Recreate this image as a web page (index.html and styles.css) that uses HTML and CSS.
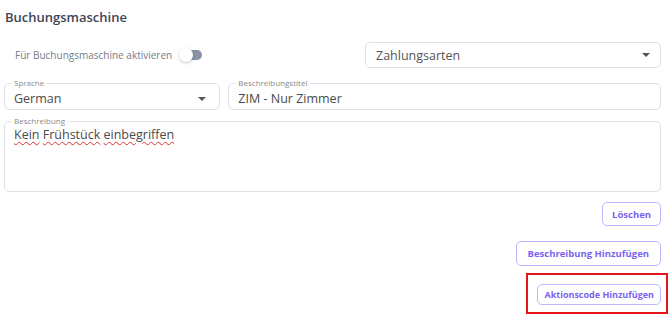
FILE: index.html
```html
<!DOCTYPE html>
<html lang="de">
<head>
  <meta charset="UTF-8">
  <title>Buchungsmaschine</title>
  <link rel="stylesheet" href="styles.css">
</head>
<body>

  <div class="panel">
    <h3 class="panel-title">Buchungsmaschine</h3>

    <!-- Aktivierung und Zahlungsarten -->
    <div class="top-row">
      <label class="toggle-line">
        Für Buchungsmaschine aktivieren
        <span class="switch"><span class="knob"></span></span>
      </label>
      <div class="select-box">
        <span>Zahlungsarten</span>
        <span class="caret"></span>
      </div>
    </div>

    <!-- Sprache und Titel -->
    <div class="field-row">
      <fieldset class="field lang">
        <legend>Sprache</legend>
        <div class="field-value">
          <span>German</span>
          <span class="caret"></span>
        </div>
      </fieldset>
      <fieldset class="field">
        <legend>Beschreibungstitel</legend>
        <div class="field-value">ZIM - Nur Zimmer</div>
      </fieldset>
    </div>

    <fieldset class="field area">
      <legend>Beschreibung</legend>
      <div class="field-value">
        <span class="typo">Kein</span> <span class="typo">Frühstück</span> <span class="typo">einbegriffen</span>
      </div>
    </fieldset>

    <!-- Aktionen -->
    <div class="actions">
      <button class="btn">Löschen</button>
      <button class="btn wide">Beschreibung Hinzufügen</button>
      <div class="highlight">
        <button class="btn small">Aktionscode Hinzufügen</button>
      </div>
    </div>
  </div>

</body>
</html>
```

FILE: styles.css
```css
body {
  margin: 0;
  background: #fff;
  font-family: "Open Sans", "Noto Sans", sans-serif;
  color: #444;
}

.panel {
  padding: 9px 9px 0 4px;
}

.panel-title {
  margin: 0 0 0 1px;
  font-size: 13px;
  line-height: 16px;
  font-weight: 600;
  color: #3d4456;
}

/* Erste Zeile */
.top-row {
  display: flex;
  align-items: center;
  justify-content: space-between;
  margin-top: 17px;
}

.toggle-line {
  display: flex;
  align-items: center;
  gap: 9px;
  padding-left: 11px;
  font-size: 10px;
  color: #777c86;
}

.switch {
  position: relative;
  width: 21px;
  height: 10px;
  border-radius: 5px;
  background: #8891a5;
}

.knob {
  position: absolute;
  left: -2px;
  top: -2px;
  width: 14px;
  height: 14px;
  border-radius: 50%;
  background: #fff;
  box-shadow: 0 1px 3px rgba(0, 0, 0, 0.22);
}

.select-box {
  display: flex;
  align-items: center;
  justify-content: space-between;
  box-sizing: border-box;
  width: 296px;
  height: 26px;
  padding: 0 10px 0 10px;
  border: 1px solid #dfe1e7;
  border-radius: 5px;
  font-size: 12.5px;
  color: #555;
}

.caret {
  width: 0;
  height: 0;
  border-left: 4px solid transparent;
  border-right: 4px solid transparent;
  border-top: 4px solid #555;
}

/* Felder mit Beschriftung im Rahmen */
.field-row {
  display: grid;
  grid-template-columns: 1fr 2fr;
  gap: 8px;
  margin-top: 10px;
}

.field {
  margin: 0;
  min-width: 0;
  padding: 0 6px 0 6px;
  border: 1px solid #dfe1e7;
  border-radius: 5px;
}

.field legend {
  padding: 0 3px;
  font-size: 8px;
  line-height: 10px;
  color: #8a8a8a;
}

.field-value {
  display: flex;
  align-items: center;
  justify-content: space-between;
  height: 21px;
  padding: 0 7px 0 3px;
  font-size: 12.5px;
  color: #4a4a4a;
}

.area {
  margin-top: 6px;
  height: 76px;
  box-sizing: border-box;
}

.area .field-value {
  display: block;
  height: auto;
  line-height: 16px;
  margin-top: 1px;
}

.typo {
  text-decoration: underline wavy #e03030;
  text-decoration-thickness: 1px;
  text-underline-offset: 2px;
}

/* Knöpfe */
.actions {
  display: flex;
  flex-direction: column;
  align-items: flex-end;
  margin-top: 10px;
}

.btn {
  height: 24px;
  padding: 0 9px;
  border: 1px solid #c2b5ff;
  border-radius: 5px;
  background: #fff;
  font-family: inherit;
  font-size: 9.5px;
  font-weight: 700;
  color: #7a63f0;
  cursor: pointer;
}

.btn.wide {
  margin-top: 15px;
  height: 25px;
  padding: 0 11px;
}

.btn.small {
  height: 21px;
  padding: 0 6px;
  font-size: 9px;
}

.highlight {
  margin-top: 7px;
  margin-right: -7px;
  padding: 6px 5px 7px 9px;
  border: 2px solid #e3141b;
}
```
